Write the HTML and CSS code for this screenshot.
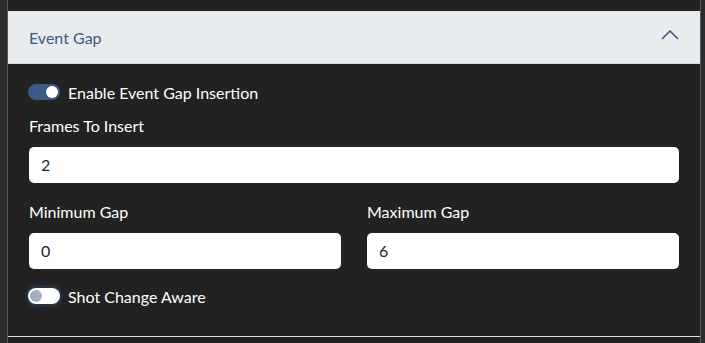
FILE: index.html
```html
<!DOCTYPE html>
<html lang="en">
<head>
  <meta charset="UTF-8" />
  <meta name="viewport" content="width=705, height=343, initial-scale=1.0" />
  <title>Event Gap</title>
  <link rel="stylesheet" href="styles.css">
</head>
<body>
  <div class="panel">
    <div class="prev-item"></div>

    <div class="accordion-item">
      <div class="accordion-header">
        <span>Event Gap</span>
        <svg class="chevron" width="18" height="10" viewBox="0 0 18 10">
          <path d="M1 9 L9 1 L17 9" fill="none" stroke="#3b5b85" stroke-width="1.6" />
        </svg>
      </div>

      <div class="accordion-body">
        <label class="switch-row">
          <span class="switch on"><span class="knob"></span></span>
          Enable Event Gap Insertion
        </label>

        <div class="field">
          <div class="field-label">Frames To Insert</div>
          <div class="input">2</div>
        </div>

        <div class="field-grid">
          <div class="field">
            <div class="field-label">Minimum Gap</div>
            <div class="input">0</div>
          </div>
          <div class="field">
            <div class="field-label">Maximum Gap</div>
            <div class="input">6</div>
          </div>
        </div>

        <label class="switch-row">
          <span class="switch off"><span class="knob"></span></span>
          Shot Change Aware
        </label>
      </div>
    </div>
  </div>
</body>
</html>
```

FILE: styles.css
```css
html, body {
  margin: 0;
  padding: 0;
  height: 100%;
  background: #2b2b2b;
  font-family: Lato, 'Open Sans', sans-serif;
  color: #fff;
  overflow: hidden;
}

.panel {
  margin-left: 7px;
  width: 692px;
  height: 100%;
  border-left: 1px solid #5a5a5a;
  border-right: 1px solid #5a5a5a;
  background: #222;
}

.prev-item {
  height: 11px;
}

.accordion-item {
  border-bottom: 1px solid #dcdfe3;
}

.accordion-header {
  height: 52px;
  background: #e9ecef;
  border-bottom: 1px solid #d4d8dc;
  display: flex;
  align-items: center;
  justify-content: space-between;
  padding: 0 21px;
  font-size: 16px;
  color: #3b5b85;
}

.chevron {
  margin-top: -4px;
}

.accordion-body {
  padding: 20px 21px 21px 21px;
  height: 231px;
}

.switch-row {
  display: flex;
  align-items: center;
  gap: 8px;
  font-size: 16px;
  height: 16px;
  margin-left: -1px;
}

.switch {
  width: 32px;
  height: 16px;
  border-radius: 8px;
  display: flex;
  align-items: center;
  box-sizing: border-box;
  padding: 0 2px;
}

.switch .knob {
  width: 12px;
  height: 12px;
  border-radius: 50%;
}

.switch.on {
  background: #3b5b85;
  justify-content: flex-end;
}

.switch.on .knob {
  background: #fff;
}

.switch.off {
  background: #fff;
  box-shadow: 0 0 0 3px #26303d;
}

.switch.off .knob {
  background: #a4b0c0;
}

.field {
  margin-top: 17px;
}

.field-label {
  font-size: 16px;
  line-height: 18px;
  margin-bottom: 12px;
}

.input {
  background: #fff;
  color: #212529;
  border-radius: 5px;
  height: 36px;
  line-height: 36px;
  padding: 0 12px;
  font-size: 16px;
}

.field-grid {
  display: grid;
  grid-template-columns: 1fr 1fr;
  column-gap: 26px;
  margin-top: 20px;
  margin-bottom: 19px;
}

.field-grid .field {
  margin-top: 0;
}
```
